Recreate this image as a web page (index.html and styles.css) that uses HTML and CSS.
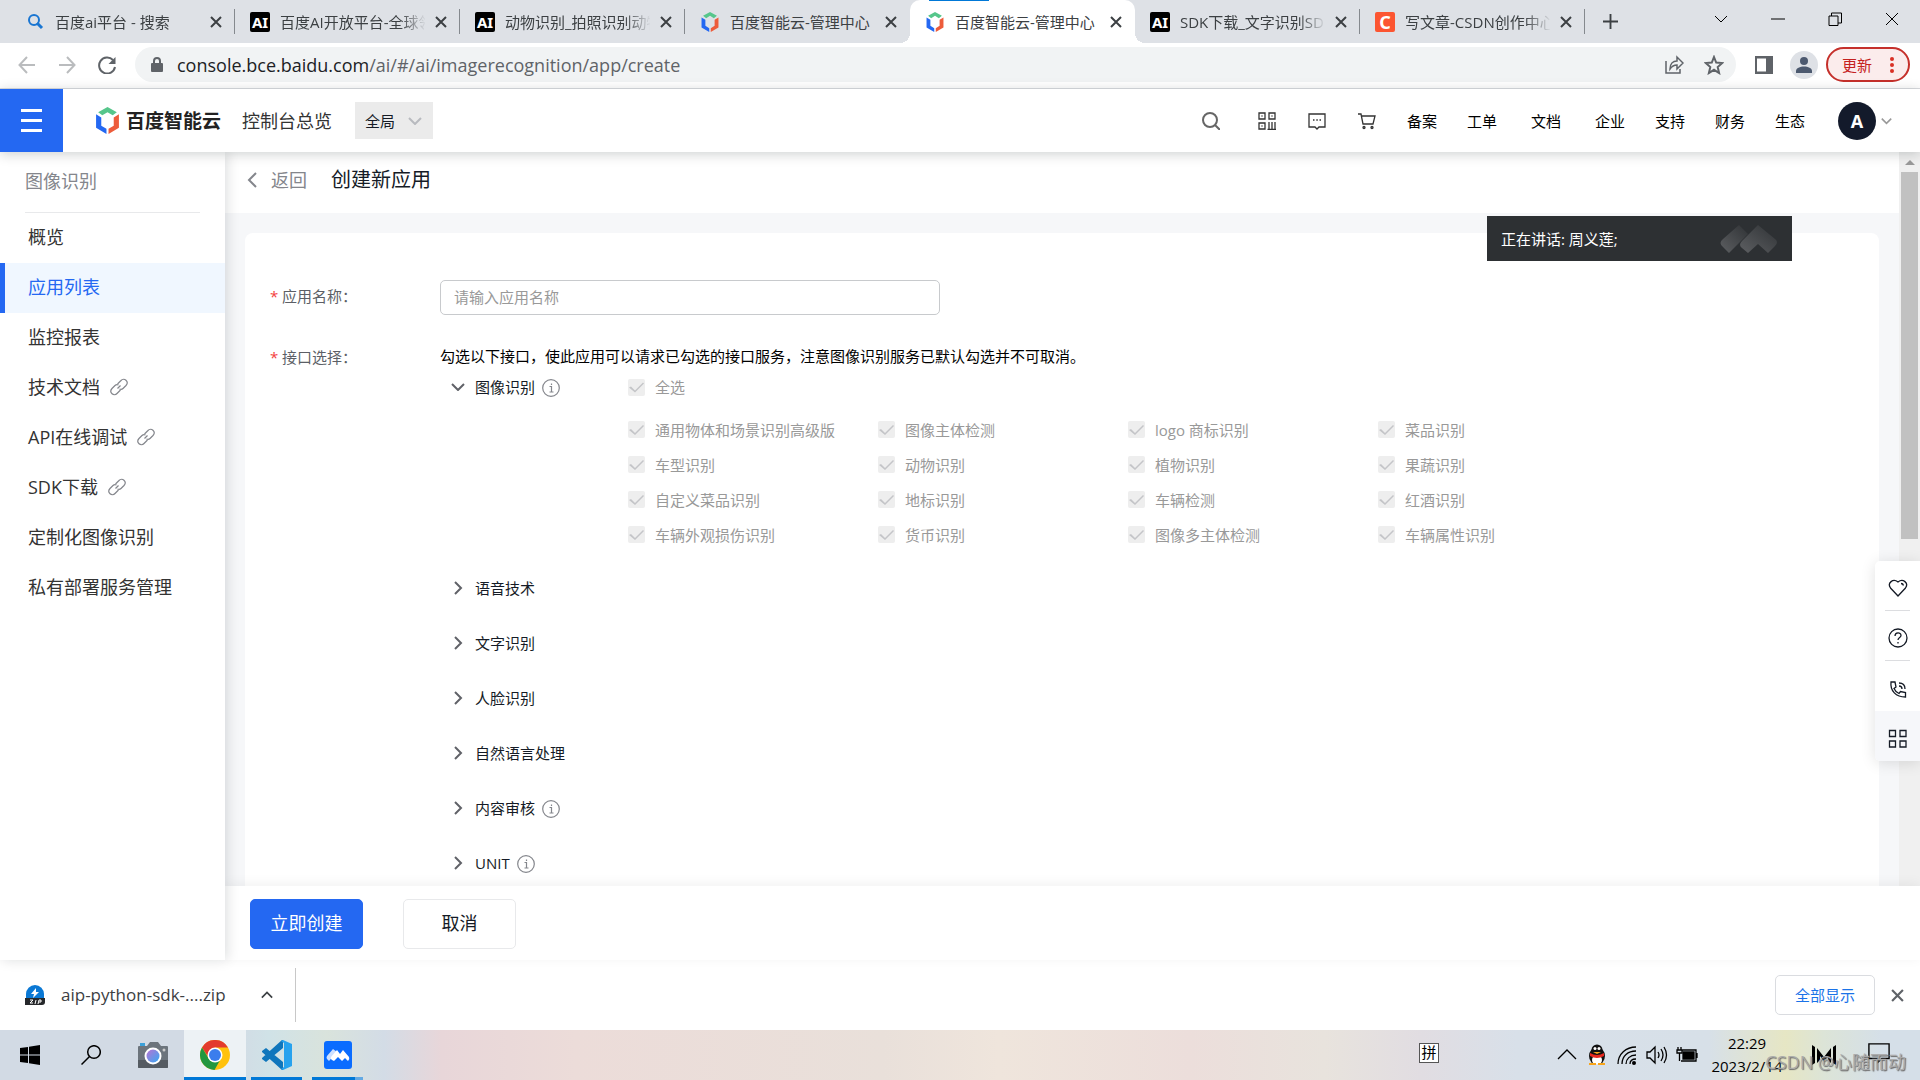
FILE: index.html
```html
<!DOCTYPE html>
<html lang="zh-CN">
<head>
<meta charset="utf-8">
<title>百度智能云-管理中心</title>
<link rel="stylesheet" href="styles.css">
</head>
<body>
<svg class="sprite" aria-hidden="true">
  <symbol id="close" viewBox="0 0 12 12"><path d="M1 1l10 10M11 1L1 11" fill="none" stroke="currentColor" stroke-width="2"/></symbol>
  <symbol id="hex" viewBox="0 0 24 26"><path fill="#56c68b" d="M12 0l9 5-4 3-5-3-5 3-4-3z"/><path fill="#2468f2" d="M1 7l5 3v8l5 3v5L1 20z"/><path fill="#ed5c3b" d="M23 7l-5 3v8l-5 3v5l10-6z"/></symbol>
  <symbol id="down" viewBox="0 0 14 8"><path d="M1 1l6 6 6-6" fill="none" stroke="currentColor" stroke-width="2"/></symbol>
  <symbol id="right" viewBox="0 0 8 14"><path d="M1 1l6 6-6 6" fill="none" stroke="currentColor" stroke-width="2"/></symbol>
  <symbol id="info" viewBox="0 0 18 18"><g fill="none" stroke="currentColor" stroke-width="1.200"><circle cx="9" cy="9" r="8.300"/><path d="M7.500 7.500h2V13M7.500 13h4M9.500 4.500V6"/></g></symbol>
  <symbol id="link" viewBox="0 0 18 18"><g fill="none" stroke="currentColor" stroke-width="1.200"><path d="M7.500 6L11 2.500c3-3.500 8.500 1 5 5L13 10.500c-1 1-2.500 1-3.500.5"/><path d="M10.500 12L7 15.500c-3 3.500-8.500-1-5-5L5 7.500c1-1 2.500-1 3.500-.5"/><path d="M7.500 10.500l3-3"/></g></symbol>
</svg>

<div class="shell">
  <div class="tabstrip">
    <nav class="tabs">
      <div class="tab"><svg class="fav" viewBox="0 0 20 20"><path d="M12 11l5 5" stroke="#1a76d2" stroke-width="3"/><circle cx="9" cy="8" r="5" fill="none" stroke="#1a76d2" stroke-width="2"/></svg><span>百度ai平台 - 搜索</span><button aria-label="关闭"><svg><use href="#close"/></svg></button></div>
      <div class="tab"><i class="fav ai">AI</i><span>百度AI开放平台-全球领先的</span><button aria-label="关闭"><svg><use href="#close"/></svg></button></div>
      <div class="tab"><i class="fav ai">AI</i><span>动物识别_拍照识别动物种类</span><button aria-label="关闭"><svg><use href="#close"/></svg></button></div>
      <div class="tab plain"><svg class="fav"><use href="#hex"/></svg><span>百度智能云-管理中心</span><button aria-label="关闭"><svg><use href="#close"/></svg></button></div>
      <div class="tab active"><svg class="fav"><use href="#hex"/></svg><span>百度智能云-管理中心</span><button aria-label="关闭"><svg><use href="#close"/></svg></button></div>
      <div class="tab"><i class="fav ai">AI</i><span>SDK下载_文字识别SDK下载</span><button aria-label="关闭"><svg><use href="#close"/></svg></button></div>
      <div class="tab"><i class="fav csdn">C</i><span>写文章-CSDN创作中心平台</span><button aria-label="关闭"><svg><use href="#close"/></svg></button></div>
      <button class="newtab" aria-label="新标签页"><svg viewBox="0 0 16 16"><path d="M8 0v16M0 8h16" stroke="currentColor" stroke-width="2"/></svg></button>
    </nav>
    <div class="winctl">
      <button aria-label="搜索标签页"><svg viewBox="0 0 14 14"><path d="M1 4l6 6 6-6"/></svg></button>
      <button aria-label="最小化"><svg viewBox="0 0 14 14"><path d="M0 7h14"/></svg></button>
      <button aria-label="还原"><svg viewBox="0 0 14 14"><path d="M1 4h9v9.500H1zM3.500 4V1h10v10H10"/></svg></button>
      <button aria-label="关闭窗口"><svg viewBox="0 0 14 14"><path d="M1 1l12 12M13 1L1 13"/></svg></button>
    </div>
    <div class="sharebar"></div>
  </div>

  <div class="toolbar">
    <button class="faded" aria-label="后退"><svg viewBox="0 0 18 18"><path d="M17 9H2M9 1L1.500 9 9 17"/></svg></button>
    <button class="faded" aria-label="前进"><svg viewBox="0 0 18 18"><path d="M1 9h15M9 1l7.500 8L9 17"/></svg></button>
    <button aria-label="刷新"><svg viewBox="0 0 18 18"><path d="M15 4a8 8 0 1 0 2 7"/><path d="M17.500 1v7h-7z" fill="currentColor" stroke="none"/></svg></button>
    <label class="omnibox">
      <svg class="lock" viewBox="0 0 12 16"><rect y="6" width="12" height="9" rx="1" fill="#5f6368"/><path d="M3 7V4a3 3 0 0 1 6 0v3" fill="none" stroke="#5f6368" stroke-width="2"/></svg>
      <span class="url"><b>console.bce.baidu.com</b>/ai/#/ai/imagerecognition/app/create</span>
      <svg viewBox="0 0 20 20"><path d="M2 6v12h14v-4M6 14c0-5 3-8 7-8V2l6 6-6 6v-4c-3 0-5 1-7 4z"/></svg>
      <svg viewBox="0 0 20 20"><path stroke-width="2" d="M10 2l2.200 5.500 6 .5-4.500 4 1.400 6-5.100-3.200L4.900 18l1.400-6L1.800 8l6-.5z"/></svg>
    </label>
    <svg class="panel" viewBox="0 0 18 18"><path fill="#5f6368" d="M0 0h18v18H0zM2 2.500v13h9v-13z" fill-rule="evenodd"/></svg>
    <svg class="profile" viewBox="0 0 28 28"><circle cx="14" cy="14" r="14" fill="#dee1e6"/><circle cx="14" cy="10" r="4" fill="#4c596f"/><path d="M6 22v-2c0-6 16-6 16 0v2z" fill="#4c596f"/></svg>
    <button class="update">更新<svg viewBox="0 0 4 16"><circle cx="2" cy="2" r="2"/><circle cx="2" cy="8" r="2"/><circle cx="2" cy="14" r="2"/></svg></button>
  </div>

  <header class="topbar">
    <button class="menu" aria-label="菜单"><i></i><i></i><i></i></button>
    <a class="brand" href="#"><svg><use href="#hex"/></svg>百度智能云</a>
    <a class="overview" href="#">控制台总览</a>
    <button class="region">全局<svg><use href="#down"/></svg></button>
    <div class="icons">
      <svg viewBox="0 0 18 18"><g stroke="#666" stroke-width="2"><circle cx="8" cy="8" r="7"/><path d="M13 13l5 5"/></g></svg>
      <svg viewBox="0 0 18 18"><path d="M1 1h6v6H1zM11 1h6v6h-6zM1 11h6v6H1zM3.500 4h1M13.500 4h1M3.500 14h1M11 10v8M14 10v8M17 10v8M9.500 17.300H18"/></svg>
      <svg viewBox="0 0 18 18"><path d="M1 2h16v13h-6l-2 2-2-2H1zM5 8h1.500M8.300 8h1.500M11.500 8H13"/></svg>
      <svg viewBox="0 0 18 18"><path d="M0 2h3l2 10h10l2-8H4"/><circle cx="6" cy="15.500" r="1"/><circle cx="14" cy="15.500" r="1"/></svg>
    </div>
    <nav class="links"><a href="#">备案</a><a href="#">工单</a><a class="wide" href="#">文档</a><a href="#">企业</a><a href="#">支持</a><a href="#">财务</a><a href="#">生态</a></nav>
    <button class="account"><span>A</span><svg><use href="#down"/></svg></button>
  </header>

  <div class="body">
    <aside class="side">
      <h2>图像识别</h2>
      <a href="#">概览</a>
      <a href="#" class="on">应用列表</a>
      <a href="#">监控报表</a>
      <a href="#">技术文档<svg><use href="#link"/></svg></a>
      <a href="#">API在线调试<svg><use href="#link"/></svg></a>
      <a href="#">SDK下载<svg><use href="#link"/></svg></a>
      <a href="#">定制化图像识别</a>
      <a href="#">私有部署服务管理</a>
    </aside>

    <main class="main">
      <div class="scroll">
        <div class="content">
          <div class="pagehead"><a href="#"><svg viewBox="0 0 10 16"><path d="M9 1L2 8l7 7" fill="none" stroke="currentColor" stroke-width="2"/></svg>返回</a><h1>创建新应用</h1></div>
          <form class="card">
            <div class="row">
              <label class="name" for="app"><em>*</em>应用名称：</label>
              <input id="app" class="text" type="text" placeholder="请输入应用名称">
            </div>
            <div class="row">
              <div class="name"><em>*</em>接口选择：</div>
              <div class="api">
                <p>勾选以下接口，使此应用可以请求已勾选的接口服务，注意图像识别服务已默认勾选并不可取消。</p>
                <div class="open">
                  <button type="button" class="group first" aria-expanded="true"><svg class="dn"><use href="#down"/></svg>图像识别<svg class="info"><use href="#info"/></svg></button>
                  <label class="check"><input type="checkbox" checked disabled>全选</label>
                </div>
                <div class="grid">
                  <label class="check"><input type="checkbox" checked disabled>通用物体和场景识别高级版</label>
                  <label class="check"><input type="checkbox" checked disabled>图像主体检测</label>
                  <label class="check"><input type="checkbox" checked disabled>logo 商标识别</label>
                  <label class="check"><input type="checkbox" checked disabled>菜品识别</label>
                  <label class="check"><input type="checkbox" checked disabled>车型识别</label>
                  <label class="check"><input type="checkbox" checked disabled>动物识别</label>
                  <label class="check"><input type="checkbox" checked disabled>植物识别</label>
                  <label class="check"><input type="checkbox" checked disabled>果蔬识别</label>
                  <label class="check"><input type="checkbox" checked disabled>自定义菜品识别</label>
                  <label class="check"><input type="checkbox" checked disabled>地标识别</label>
                  <label class="check"><input type="checkbox" checked disabled>车辆检测</label>
                  <label class="check"><input type="checkbox" checked disabled>红酒识别</label>
                  <label class="check"><input type="checkbox" checked disabled>车辆外观损伤识别</label>
                  <label class="check"><input type="checkbox" checked disabled>货币识别</label>
                  <label class="check"><input type="checkbox" checked disabled>图像多主体检测</label>
                  <label class="check"><input type="checkbox" checked disabled>车辆属性识别</label>
                </div>
                <button type="button" class="group"><svg class="rt"><use href="#right"/></svg>语音技术</button>
                <button type="button" class="group"><svg class="rt"><use href="#right"/></svg>文字识别</button>
                <button type="button" class="group"><svg class="rt"><use href="#right"/></svg>人脸识别</button>
                <button type="button" class="group"><svg class="rt"><use href="#right"/></svg>自然语言处理</button>
                <button type="button" class="group"><svg class="rt"><use href="#right"/></svg>内容审核<svg class="info"><use href="#info"/></svg></button>
                <button type="button" class="group"><svg class="rt"><use href="#right"/></svg>UNIT<svg class="info"><use href="#info"/></svg></button>
              </div>
            </div>
          </form>
        </div>
        <div class="bar"><i class="arrow"></i><i class="thumb"></i></div>
      </div>
      <div class="actions"><button class="primary">立即创建</button><button>取消</button></div>
    </main>

    <div class="speaking">正在讲话: 周义莲;
      <svg viewBox="0 0 58 30"><defs><linearGradient id="m" x1="0" y1="1" x2="1" y2="0"><stop offset="0" stop-color="#5d5f62"/><stop offset="1" stop-color="#303336"/></linearGradient></defs><path fill="url(#m)" d="M19 1L3 15q-5 4 0 8l6 6L28 10z"/><path fill="url(#m)" d="M38 1L22 17q-4 4 0 7l6 5 10-9 10 9 7-7q4-4 0-7z"/></svg>
    </div>
    <div class="dock">
      <button aria-label="收藏"><svg viewBox="0 0 20 20"><path d="M10 18L2.500 10C-1 5 5 0 10 4c5-4 11 1 7.500 6zM13 5.500q2 0 2.500 2"/></svg></button>
      <button aria-label="帮助"><svg viewBox="0 0 20 20"><circle cx="10" cy="10" r="9"/><path d="M7 8c0-4 6-4 6-.5 0 2-3 2-3 4.500M10 14v1.500"/></svg></button>
      <button aria-label="电话"><svg viewBox="0 0 20 20"><path d="M3 3h4l1 5-2 1.500q1.500 3.500 5 5l1.500-2 5 1V18C8 18 2 12 3 3zM11 7q3 0 3 3M11 4q6 0 6 6"/></svg></button>
      <button class="last" aria-label="更多"><svg viewBox="0 0 20 20"><path d="M1.500 1.500h6v6h-6zM12 1.500h6v6h-6zM1.500 12h6v6h-6zM12 12h6v6h-6z"/></svg></button>
    </div>
  </div>

  <div class="downloads">
    <button class="file">
      <svg viewBox="0 0 20 20"><path d="M1 13V9a9 9 0 0 1 18 0v4z" fill="#0a78d4"/><path d="M11 3l-5 6h3l-1 4 6-6h-3z" fill="#fff"/><path d="M0 13h20v4q0 3-3 3H0z" fill="#26282b"/><path d="M5 15h3l-3 3h3M11 15l-1 4M13 19l1-4h2v2h-2" stroke="#fff" fill="none"/></svg>
      <span>aip-python-sdk-....zip</span>
      <svg class="up"><use href="#down"/></svg>
    </button>
    <button class="all">全部显示</button>
    <button class="x" aria-label="关闭"><svg><use href="#close"/></svg></button>
  </div>

  <footer class="taskbar">
    <button aria-label="开始"><svg class="s20" viewBox="0 0 20 20"><path d="M0 3l8-1v7.500H0zM9 1.800L20 0v9.500H9zM0 10.500h8V18l-8-1zM9 10.500h11V20L9 18.200z"/></svg></button>
    <button aria-label="搜索"><svg class="s20" viewBox="0 0 20 20"><g fill="none" stroke="#000" stroke-width="1.500"><circle cx="13" cy="7" r="6.300"/><path d="M8.500 11.500L.5 19.500"/></g></svg></button>
    <button aria-label="相机"><svg class="s30" viewBox="0 0 30 26"><path fill="#3ba0d8" d="M2 1h5v4H2z"/><path fill="#6c747c" d="M1 4h8l3-4h8l3 4h6q1 0 1 1v20q0 1-1 1H1q-1 0-1-1V5q0-1 1-1z"/><path fill="#555b62" d="M0 18h30v7q0 1-1 1H1q-1 0-1-1z"/><circle cx="15" cy="14" r="8.500" fill="#fff"/><defs><linearGradient id="lens" x1="0" y1="0" x2="1" y2="1"><stop offset="0" stop-color="#b873d4"/><stop offset="1" stop-color="#35a9f4"/></linearGradient></defs><circle cx="15" cy="14" r="6.500" fill="url(#lens)"/><circle cx="26" cy="8" r="1.500" fill="#ccc"/></svg></button>
    <button class="cur" aria-label="Chrome"><svg class="s30" viewBox="0 0 30 30"><circle cx="15" cy="15" r="15" fill="#ffc20e"/><path fill="#e33b2e" d="M2 7.500A15 15 0 0 1 28 7.500H15L9 18z"/><path fill="#23973f" d="M2 7.500A15 15 0 0 0 14.500 30L21 18.500 9 19z"/><circle cx="15" cy="15" r="7.500" fill="#fff"/><circle cx="15" cy="15" r="6" fill="#3b7ded"/></svg></button>
    <button class="run" aria-label="VS Code"><svg class="s30" viewBox="0 0 30 30"><path fill="#0f76bc" d="M21 0v8L4 22l-4-3V18L20 0zM0 11l4-3 17 14v8h-1L0 12z"/><path fill="#27a2ee" d="M21 0l9 4v22l-9 4-2-1 3-2V3l-3-2z"/></svg></button>
    <button class="run multi" aria-label="腾讯会议"><svg class="s28" viewBox="0 0 28 28"><rect width="28" height="28" rx="3" fill="#0a6cff"/><path fill="#cfe1ff" d="M9 8l-6 7q-1 2 0 3l2 2 8-9z"/><path fill="#fff" d="M13 9l-6 7q-1 2 1 3l2 1 4-4 4 4 3-3 3 3q2-2 1-4l-6-7-3 4z"/></svg></button>
    <span class="grow"></span>
    <span class="ime">拼</span>
    <div class="tray">
      <svg viewBox="0 0 22 22"><path d="M2 15l9-9 9 9"/></svg>
      <svg viewBox="0 0 22 22"><g stroke="none"><ellipse cx="11" cy="12" rx="8" ry="9" fill="#111"/><ellipse cx="11" cy="16" rx="5" ry="5" fill="#fff"/><circle cx="11" cy="6" r="5.500" fill="#111"/><path d="M4 9q7 4 14 0v3q-7 4-14 0z" fill="#e8281e"/><circle cx="9" cy="4.500" r="1.500" fill="#fff"/><circle cx="13" cy="4.500" r="1.500" fill="#fff"/><path d="M7 8h8l-4 2zM3 19h7v2H3zM12 19h7v2h-7z" fill="#f8a51b"/></g></svg>
      <svg viewBox="0 0 22 22"><path d="M2 20C2 10 10 3 20 3M6 20C6 12 12 7 20 7M10 20c0-5 4-9 10-9M14 20c0-3 2-5 6-5"/><circle cx="18" cy="19" r="2" fill="#000" stroke="none"/></svg>
      <svg viewBox="0 0 22 22"><path d="M1 8h3l5-5v16l-5-5H1zM12 8q2 3 0 6M15 5q4 6 0 12M18 3q5 8 0 16"/></svg>
      <svg viewBox="0 0 22 22"><path d="M6 6h14v11H5M21 9v5M2 3v3M5 3v3M1 6h5v3H1zM3.500 9v8"/><path d="M7 8h11v7H7z" fill="#000"/></svg>
    </div>
    <div class="clock"><time>22:29</time><time>2023/2/14</time></div>
    <svg class="mlogo" viewBox="0 0 24 20"><path d="M0 0l3 2v16l-3 2zM24 0l-3 2v16l3 2zM5 3l7 9 7-9v15l-3-3v-4l-4 6-4-6v4l-3 3z"/></svg>
    <svg class="note" viewBox="0 0 24 22"><path d="M1 1h22v16h-8l-4 4v-4H1z" fill="none" stroke="#000" stroke-width="1.500"/></svg>
    <div class="mark">CSDN @心随而动</div>
  </footer>
</div>
</body>
</html>
```
FILE: styles.css
```css
* { box-sizing: border-box; }
body { margin: 0; font: 15px/20px "Open Sans", "Noto Sans CJK SC", sans-serif; color: #151b26; background: #fff; }
button { font: inherit; color: inherit; border: 0; background: none; padding: 0; display: flex; align-items: center; justify-content: center; }
a { color: inherit; text-decoration: none; }
svg { display: block; flex: none; }
i, em { font-style: normal; }
.sprite { position: absolute; width: 0; height: 0; }
.shell { display: flex; flex-direction: column; height: 100vh; overflow: hidden; }

/* browser tabs */
.tabstrip { position: relative; display: flex; justify-content: space-between; height: 43px; flex: none; background: #dee1e6; color: #3c4043; }
.tabs { display: flex; flex: 1; min-width: 0; padding-left: 10px; }
.tab { position: relative; display: flex; align-items: center; flex: 0 1 225px; min-width: 0; padding: 0 13px 0 15px; gap: 10px; }
.tab::after { content: ""; position: absolute; right: 0; top: 9px; width: 1px; height: 25px; background: #85898e; }
.tab span { flex: 1; overflow: hidden; white-space: nowrap; mask-image: linear-gradient(to right, #000 120px, transparent 146px); }
.tab button svg { width: 12px; height: 12px; }
.fav { width: 20px; height: 20px; flex: none; }
.ai, .csdn { font: bold 15px/20px "Noto Sans", sans-serif; text-align: center; color: #fff; background: #000; border-radius: 2px; }
.csdn { background: #fc5531; font-size: 18px; }
.tab.active { background: #fff; border-radius: 10px 10px 0 0; }
.tab.plain::after { display: none; }
.tab.plain span, .tab.active span { mask-image: none; }
.tab.active::before, .tab.active::after { content: ""; position: absolute; top: auto; bottom: 0; width: 10px; height: 10px; }
.tab.active::before { left: -10px; background: radial-gradient(circle at 0 0, #dee1e6 10px, #fff 10px); }
.tab.active::after { right: -10px; background: radial-gradient(circle at 100% 0, #dee1e6 10px, #fff 10px); }
.newtab { padding: 0 18px; }
.newtab svg { width: 15px; height: 15px; }
.winctl { display: flex; padding-bottom: 6px; }
.winctl button { width: 57px; }
.winctl svg { width: 14px; height: 14px; fill: none; stroke: #000; }
.sharebar { position: absolute; left: 929px; top: 0; width: 60px; height: 1px; background: #0078d7; }

/* address bar */
.toolbar { display: flex; align-items: center; flex: none; height: 46px; padding: 0 10px 2px 7px; border-bottom: 1px solid #dadce0; color: #5f6368; }
.toolbar > button:not(.update) { width: 40px; }
.toolbar > button:not(.update) svg { width: 18px; height: 18px; fill: none; stroke: currentColor; stroke-width: 2; }
.faded { color: #babcbe; }
.omnibox { display: flex; align-items: center; flex: 1; height: 35px; margin-left: 8px; padding: 0 12px 0 16px; gap: 20px; border-radius: 18px; background: #f1f3f4; }
.omnibox svg { width: 20px; height: 20px; fill: none; stroke: #5f6368; stroke-width: 1.5; }
.omnibox .lock { width: 12px; height: 16px; stroke: none; }
.url { flex: 1; margin-left: -6px; font-size: 18px; }
.url b { font-weight: 400; color: #202124; }
.panel { width: 18px; height: 18px; margin: 0 17px 0 19px; }
.profile { width: 28px; height: 28px; margin-right: 8px; }
.update { height: 35px; padding: 0 14px; gap: 18px; border: 2px solid #c5302b; border-radius: 18px; background: #fbecec; color: #c5221f; }
.update svg { width: 4px; height: 16px; fill: #d93025; }

/* console header */
.topbar { position: relative; z-index: 3; display: flex; align-items: center; flex: none; height: 63px; background: #fff; box-shadow: 0 2px 12px rgba(0, 20, 20, .2); }
.menu { flex-direction: column; gap: 7px; width: 63px; height: 63px; background: #2468f2; }
.menu i { width: 21px; height: 3px; background: #fff; }
.brand { display: flex; align-items: center; gap: 6px; margin-left: 32px; font-size: 19px; font-weight: 700; color: #222; }
.brand svg { width: 25px; height: 27px; }
.overview { margin-left: 21px; font-size: 18px; color: #333; }
.region { justify-content: space-between; width: 78px; height: 37px; margin-left: 23px; padding: 0 11px 0 10px; background: #ebebeb; }
.region svg { width: 14px; height: 8px; color: #b8babf; }
.icons { display: flex; gap: 32px; margin-left: auto; }
.icons svg { width: 18px; height: 18px; fill: none; stroke: #333; stroke-width: 1.3; }
.icons svg:first-child { margin-right: 6px; }
.links { display: flex; margin-left: 16px; color: #000; }
.links a { padding: 0 15px; }
.links .wide { padding: 0 19px; }
.account { gap: 5px; margin: 0 28px 0 18px; color: #999; }
.account span { width: 38px; font: bold 18px/38px "Noto Sans", sans-serif; text-align: center; border-radius: 50%; color: #fff; background: #131a2b; }
.account svg { width: 11px; height: 8px; }

/* sidebar */
.body { position: relative; display: flex; flex: 1; min-height: 0; }
.side { position: relative; z-index: 2; flex: none; width: 225px; background: #fff; box-shadow: 2px 0 12px rgba(0, 20, 30, .14); font-size: 18px; color: #333; }
.side h2 { margin: 0 25px; height: 61px; font-size: 18px; line-height: 58px; font-weight: 400; color: #84868c; border-bottom: 1px solid #e8e9eb; }
.side a { display: flex; align-items: center; gap: 10px; height: 50px; padding: 0 0 2px 28px; }
.side svg { width: 18px; height: 18px; color: #84868c; }
.side .on { padding-left: 23px; border-left: 5px solid #2468f2; background: #f0f7ff; color: #2468f2; }

/* form */
.main { display: flex; flex-direction: column; flex: 1; min-width: 0; }
.scroll { display: flex; flex: 1; min-height: 0; }
.content { flex: 1; min-width: 0; overflow: hidden; background: #f6f7f9; }
.pagehead { display: flex; align-items: center; gap: 24px; height: 61px; padding: 0 22px 5px; background: #fff; }
.pagehead a { display: flex; align-items: center; gap: 14px; font-size: 18px; color: #84868c; }
.pagehead svg { width: 10px; height: 16px; }
.pagehead h1 { margin: 0; font-size: 20px; font-weight: 400; }
.card { margin: 20px 20px 0; padding: 47px 25px; border-radius: 8px; background: #fff; }
.row { display: flex; margin-bottom: 26px; }
.name { flex: none; width: 170px; line-height: 33px; color: #5c5f66; }
.name em { display: inline-block; width: 12px; color: #f33e3e; }
.text { width: 500px; height: 35px; padding: 0 13px 2px; font: inherit; border: 1px solid #c8cacd; border-radius: 5px; }
.text::placeholder { color: #999; }
.api { flex: 1; min-width: 0; }
.api p { margin: 0; line-height: 30px; color: #000; }
.open { display: flex; height: 32px; }
.group { justify-content: flex-start; width: 188px; height: 55px; padding-left: 11px; gap: 10px; }
.group.first { height: 32px; }
.group .dn { width: 14px; height: 8px; color: #606268; }
.group .rt { width: 14px; height: 14px; color: #606268; }
.group .info { width: 18px; height: 18px; margin: 2px 0 0 -3px; color: #84868c; }
.grid { display: grid; grid-template-columns: repeat(4, 250px); grid-auto-rows: 35px; margin: 9px 0 8px 188px; }
.check { display: flex; align-items: center; gap: 10px; color: #999; }
.check input { appearance: none; width: 17px; height: 17px; margin: 0; border-radius: 2px; background: #eee; }
.check input::before { content: ""; display: block; width: 17px; height: 17px; background: #c4c5c8; clip-path: polygon(1px 9px, 3px 8px, 7px 12px, 15px 4px, 16px 5px, 7px 14px); }

.bar { display: flex; flex-direction: column; align-items: center; flex: none; width: 21px; background: #f0f0f0; }
.arrow { margin: 8px 0 7px; border: 5px solid transparent; border-top: 0; border-bottom-color: #999; }
.thumb { width: 17px; height: 50%; background: #c1c1c1; }
.actions { position: relative; z-index: 1; display: flex; gap: 40px; padding: 13px 25px 11px; background: #fff; box-shadow: 0 -2px 12px rgba(0, 0, 0, .06); }
.actions button { width: 113px; height: 50px; padding-bottom: 2px; font-size: 18px; border: 1px solid #e8e9eb; border-radius: 5px; }
.actions .primary { color: #fff; border-color: #2468f2; background: #2468f2; }

/* floating panels */
.speaking { position: absolute; z-index: 4; right: 128px; top: 64px; display: flex; align-items: center; justify-content: space-between; width: 305px; height: 45px; padding: 0 14px; color: #fff; background: #2d3033; }
.speaking svg { width: 58px; height: 30px; }
.dock { position: absolute; z-index: 4; right: 0; top: 409px; width: 45px; border-radius: 5px 0 0 5px; overflow: hidden; background: #fff; box-shadow: 0 2px 15px rgba(0, 0, 0, .12); }
.dock button { width: 25px; height: 50px; margin: 0 10px; padding-top: 5px; border-bottom: 1px solid #dcdde0; }
.dock button:nth-child(3) { border: 0; }
.dock .last { width: 45px; margin: 0; border: 0; background: #f6f7fa; }
.dock svg { width: 20px; height: 20px; fill: none; stroke: #151b26; stroke-width: 1.3; }

/* download shelf */
.downloads { display: flex; align-items: center; flex: none; height: 70px; padding-right: 16px; }
.file { height: 54px; padding: 0 22px 0 25px; border-right: 1px solid #c8c8c8; font-size: 17px; color: #3c4043; }
.file span { width: 185px; margin-left: 16px; text-align: left; }
.file svg { width: 20px; height: 20px; }
.file .up { width: 12px; height: 8px; margin-left: 15px; transform: rotate(180deg); }
.all { width: 100px; height: 40px; margin-left: auto; border: 1px solid #dadce0; border-radius: 5px; color: #1a73e8; }
.x { margin-left: 16px; color: #5f6368; }
.x svg { width: 13px; height: 13px; }

/* taskbar */
.taskbar { position: relative; display: flex; align-items: center; flex: none; height: 50px; padding-right: 26px; color: #000; background: linear-gradient(90deg, #d2dae4 0, #d2dae4 12%, #d0e2e7 14%, #d9e3dc 17%, #d3dce6 20%, #e8d6d9 23%, #ecdcd9 30%, #e9e0da 46%, #efe5dc 52%, #ecdedb 62%, #e8e3dd 69%, #e1dde2 74%, #d8e0e9 79%, #d7e0e8 89%, #e6e6c4 93%, #dce4d7 95%, #d5dfe8 98%); }
.taskbar button { width: 62px; height: 50px; }
.taskbar button:first-child { width: 60px; }
.taskbar .cur { background: #edf2f5; border-bottom: 3px solid #0078d7; padding-top: 3px; }
.taskbar .run { width: 51px; margin: 0 5px; border-bottom: 3px solid #0078d7; padding-top: 3px; }
.taskbar .multi { border-image: linear-gradient(90deg, #0078d7 80%, #63a9e3 80%) 3; }
.s20 { width: 20px; height: 20px; }
.s28 { width: 28px; height: 28px; }
.s30 { width: 30px; height: 30px; }
.grow { flex: 1; }
.ime { width: 20px; height: 20px; border: 1px solid #555; background: #fff; line-height: 17px; text-align: center; margin: 0 117px 4px 0; }
.tray { display: flex; gap: 8px; }
.tray svg { width: 22px; height: 22px; fill: none; stroke: #000; stroke-width: 1.3; }
.clock { display: flex; flex-direction: column; align-items: center; width: 98px; font-size: 15px; line-height: 23px; }
.mlogo { width: 24px; height: 20px; margin-left: 16px; }
.note { width: 22px; height: 22px; margin: 0 4px 4px 32px; }
.mark { position: absolute; right: 14px; bottom: 6px; font-size: 18px; line-height: 24px; color: rgba(170, 170, 170, .95); text-shadow: 1px 1px 1px #666; }
```
